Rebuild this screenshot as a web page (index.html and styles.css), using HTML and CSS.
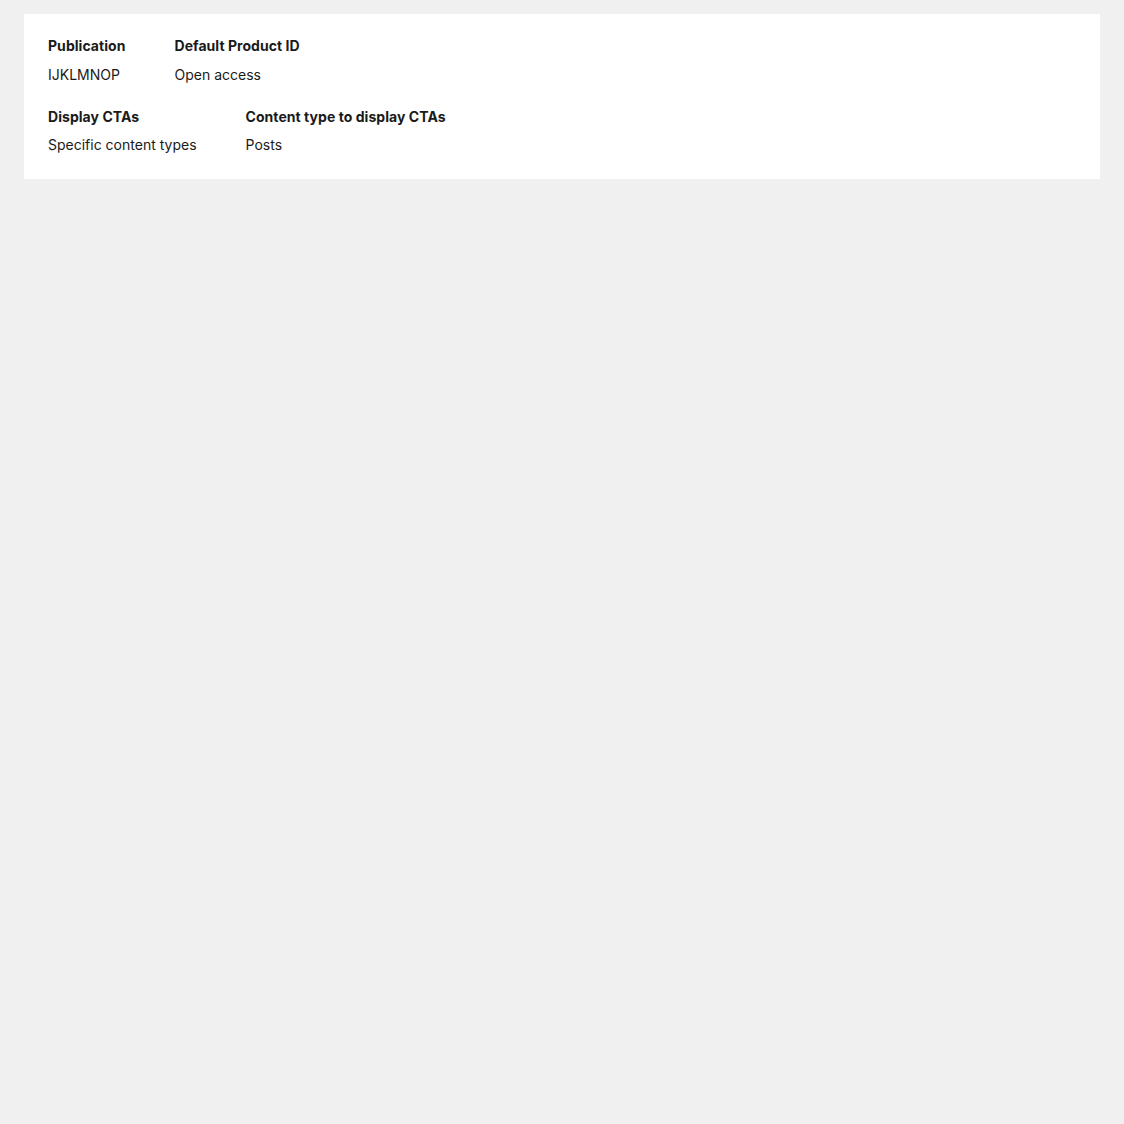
FILE: index.html
```html
<!DOCTYPE html>
<html lang="en">
<head>
<meta charset="utf-8">
<title>Settings</title>
<link rel="stylesheet" href="styles.css">
</head>
<body>
  <section class="card">
    <div class="row">
      <div class="field">
        <div class="label">Publication</div>
        <div class="value">IJKLMNOP</div>
      </div>
      <div class="field">
        <div class="label">Default Product ID</div>
        <div class="value">Open access</div>
      </div>
    </div>
    <div class="row">
      <div class="field">
        <div class="label">Display CTAs</div>
        <div class="value">Specific content types</div>
      </div>
      <div class="field">
        <div class="label">Content type to display CTAs</div>
        <div class="value">Posts</div>
      </div>
    </div>
  </section>
</body>
</html>
```

FILE: styles.css
```css
html, body {
  background: #f0f0f0;
}
body {
  margin: 14px 24px;
  font-family: Inter, "Liberation Sans", sans-serif;
  font-size: 14px;
  color: #1a1a1a;
}
.card {
  background: #ffffff;
  padding: 22px 24px 24px;
  display: flex;
  flex-direction: column;
  gap: 22px;
}
.row {
  display: flex;
  gap: 49px;
}
.field {
  display: flex;
  flex-direction: column;
  gap: 8px;
}
.label {
  font-weight: 700;
  line-height: 20px;
  letter-spacing: 0.05px;
}
.value {
  font-weight: 400;
  line-height: 20px;
  margin-top: 1px;
}
.row + .row .value {
  margin-top: 0;
}
```
